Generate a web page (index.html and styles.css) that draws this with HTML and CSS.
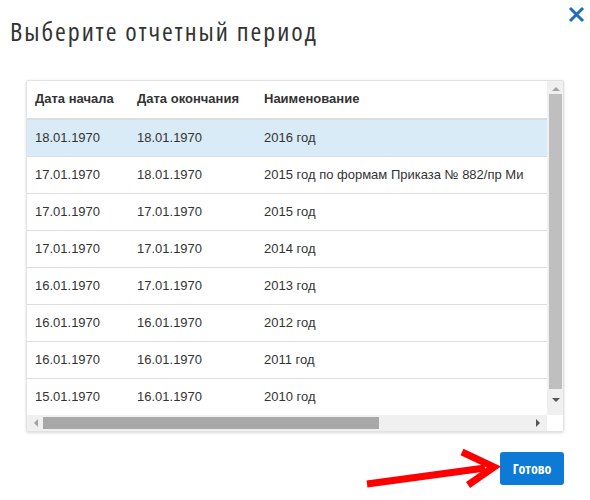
FILE: index.html
```html
<!DOCTYPE html>
<html lang="ru">
<head>
    <meta charset="UTF-8">
    <title>Выберите отчетный период</title>
    <link rel="stylesheet" href="styles.css">
</head>
<body>
    <div class="modal">
        <div class="modal-header">
            <h2 class="modal-title">Выберите отчетный период</h2>
            <button class="close" aria-label="Закрыть">
                <svg width="17" height="17" viewBox="0 0 17 17"><path d="M2 2 L15 15 M15 2 L2 15" stroke="#1f6db3" stroke-width="3" fill="none"/></svg>
            </button>
        </div>

        <div class="grid-box">
            <div class="grid-view">
                <table class="periods">
                    <colgroup>
                        <col class="c1">
                        <col class="c2">
                        <col>
                    </colgroup>
                    <thead>
                        <tr><th>Дата начала</th><th>Дата окончания</th><th>Наименование</th></tr>
                    </thead>
                    <tbody>
                        <tr class="selected"><td>18.01.1970</td><td>18.01.1970</td><td>2016 год</td></tr>
                        <tr><td>17.01.1970</td><td>18.01.1970</td><td>2015 год по формам Приказа № 882/пр Ми</td></tr>
                        <tr><td>17.01.1970</td><td>17.01.1970</td><td>2015 год</td></tr>
                        <tr><td>17.01.1970</td><td>17.01.1970</td><td>2014 год</td></tr>
                        <tr><td>16.01.1970</td><td>17.01.1970</td><td>2013 год</td></tr>
                        <tr><td>16.01.1970</td><td>16.01.1970</td><td>2012 год</td></tr>
                        <tr><td>16.01.1970</td><td>16.01.1970</td><td>2011 год</td></tr>
                        <tr><td>15.01.1970</td><td>16.01.1970</td><td>2010 год</td></tr>
                    </tbody>
                </table>
            </div>
            <div class="vscroll">
                <span class="arr arr-up"></span>
                <div class="vthumb"></div>
                <span class="arr arr-down"></span>
            </div>
            <div class="hscroll">
                <span class="arr arr-left"></span>
                <div class="hthumb"></div>
                <span class="arr arr-right"></span>
            </div>
            <div class="corner"></div>
        </div>

        <div class="modal-footer">
            <button class="btn-done">Готово</button>
        </div>

        <svg class="pointer" width="150" height="50" viewBox="0 0 150 50">
            <path d="M2 38 L120 22" stroke="#ff0000" stroke-width="7" fill="none"/>
            <path d="M97 6 L129 21 L103 39" stroke="#ff0000" stroke-width="7" fill="none" stroke-linejoin="miter"/>
        </svg>
    </div>
</body>
</html>
```

FILE: styles.css
```css
* {
    box-sizing: border-box;
}

body {
    margin: 0;
    background: #fff;
    font-family: "Liberation Sans", Arial, sans-serif;
    color: #333;
}

.modal {
    position: relative;
    width: 590px;
    height: 500px;
}

.modal-header {
    display: flex;
    justify-content: space-between;
    align-items: flex-start;
    height: 80px;
}

.modal-title {
    margin: 17px 0 0 10px;
    font-family: "Open Sans", sans-serif;
    font-stretch: condensed;
    font-weight: normal;
    font-size: 26px;
    letter-spacing: 2px;
    line-height: 28px;
    color: #333;
}

.close {
    margin: 6px 5px 0 0;
    padding: 0;
    border: none;
    background: none;
    width: 17px;
    height: 17px;
    cursor: pointer;
}

.close svg {
    display: block;
}

.grid-box {
    display: grid;
    grid-template-columns: 520px 16px;
    grid-template-rows: 334px 16px;
    width: 538px;
    margin-left: 26px;
    border: 1px solid #e2e2e2;
    border-radius: 2px;
    box-shadow: 0 1px 3px rgba(0, 0, 0, 0.15);
}

.grid-view {
    overflow: hidden;
}

.periods {
    table-layout: fixed;
    width: 600px;
    border-collapse: collapse;
    font-size: 13px;
    line-height: 20px;
    white-space: nowrap;
}

.periods .c1 {
    width: 102px;
}

.periods .c2 {
    width: 127px;
}

.periods th,
.periods td {
    padding: 8px;
    text-align: left;
    overflow: hidden;
}

.periods th {
    font-weight: bold;
    color: #333;
    border-bottom: 2px solid #ddd;
    padding-bottom: 9px;
}

.periods td {
    border-top: 1px solid #ddd;
}

.periods tbody tr:first-child td {
    border-top: none;
}

.periods tr.selected td {
    background: #d9ebf6;
}

.vscroll {
    display: flex;
    flex-direction: column;
    align-items: center;
    background: #f0f0f0;
}

.vthumb {
    width: 13px;
    height: 295px;
    margin: 0 0 0 1px;
    background: #bfbfbf;
}

.hscroll {
    display: flex;
    align-items: center;
    background: #f0f0f0;
}

.hthumb {
    width: 336px;
    height: 12px;
    margin-left: 5px;
    background: #a8a8a8;
}

.corner {
    background: #fff;
}

.arr {
    width: 0;
    height: 0;
    border-style: solid;
}

.arr-up {
    margin: 6px 0 3px 1px;
    border-width: 0 4px 4px 4px;
    border-color: transparent transparent #a3a3a3 transparent;
}

.arr-down {
    margin: 9px 0 0 1px;
    border-width: 4px 4px 0 4px;
    border-color: #555 transparent transparent transparent;
}

.arr-left {
    margin-left: 7px;
    border-width: 4px 4px 4px 0;
    border-color: transparent #a3a3a3 transparent transparent;
}

.arr-right {
    margin-left: auto;
    margin-right: 7px;
    border-width: 4px 0 4px 4px;
    border-color: transparent transparent transparent #555;
}

.modal-footer {
    display: flex;
    justify-content: flex-end;
    padding: 20px 26px 0 0;
}

.btn-done {
    width: 64px;
    height: 33px;
    padding: 0;
    border: none;
    border-radius: 3px;
    background: #0d7ad6;
    color: #fff;
    font-family: "Open Sans", sans-serif;
    font-stretch: condensed;
    font-weight: bold;
    font-size: 14px;
    cursor: pointer;
}

.pointer {
    position: absolute;
    left: 365px;
    top: 446px;
}
```
